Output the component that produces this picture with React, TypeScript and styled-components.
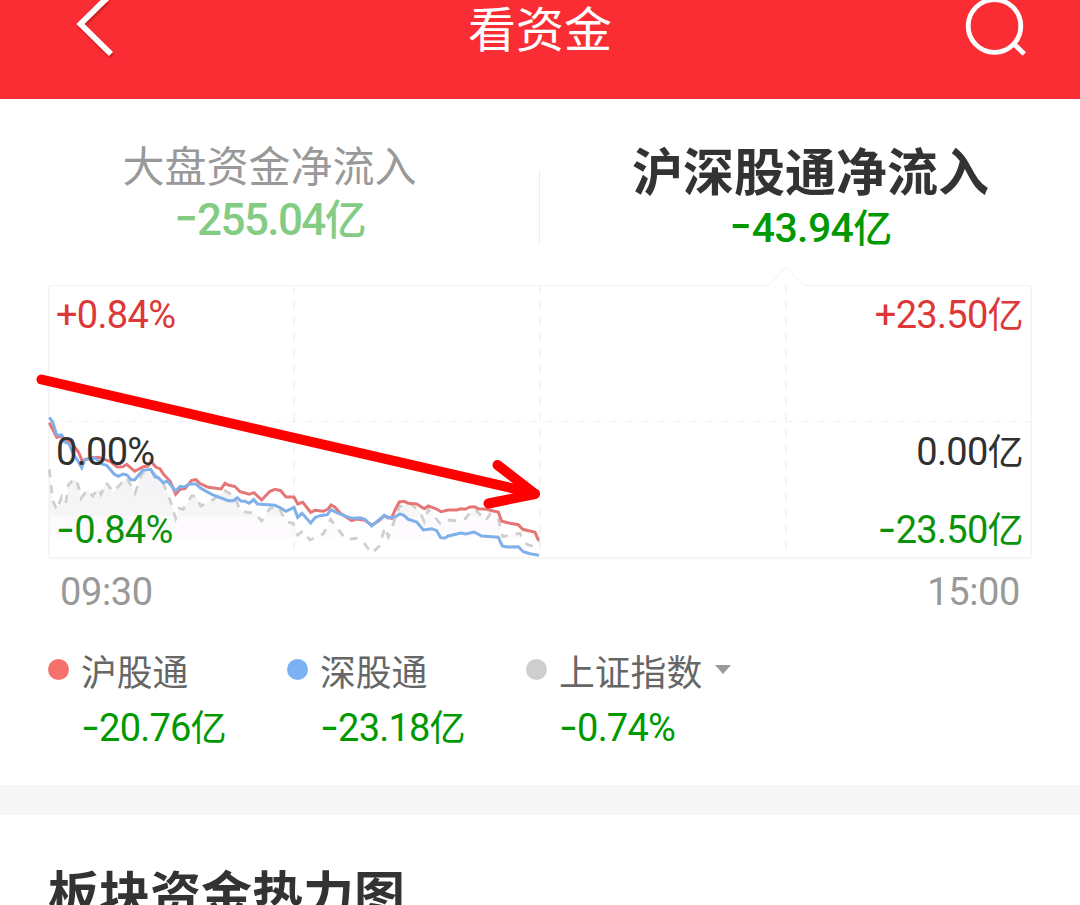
import { Fragment } from "react";
import styled, { createGlobalStyle } from "styled-components";

const GlobalStyle = createGlobalStyle`
  * {
    box-sizing: border-box;
  }

  html,
  body {
    margin: 0;
    background: #fff;
  }

  body {
    font-family: Roboto, "Noto Sans CJK SC", sans-serif;
    color: #333;
  }
`;

const Page = styled.div`
  width: 1080px;
  height: 905px;
  overflow: hidden;
  display: flex;
  flex-direction: column;
  background: #fff;
`;

const Header = styled.header`
  height: 99px;
  flex-shrink: 0;
  display: grid;
  grid-template-columns: 1fr auto 1fr;
  background: #f92d33;
  color: #fff;
`;

const HeaderTitle = styled.h1`
  margin: 0;
  padding-top: 1px;
  font-size: 48px;
  font-weight: 400;
  line-height: 60px;
`;

const BackIcon = styled.svg`
  width: 50px;
  height: 70px;
  margin-left: 70px;
  filter: drop-shadow(1px 2px 1px rgba(120, 0, 0, 0.4));
`;

const SearchIcon = styled.svg`
  width: 70px;
  height: 70px;
  margin-right: 50px;
  justify-self: end;
`;

const FundCard = styled.section`
  height: 686px;
  flex-shrink: 0;
  padding: 0 48px;
`;

const Tabs = styled.div`
  height: 187px;
  margin: 0 -48px;
  display: grid;
  grid-template-columns: 539px 1px 540px;
`;

const TabDivider = styled.div`
  height: 73px;
  margin-top: 72px;
  background: #ececec;
`;

const Tab = styled.div<{ $active?: boolean }>`
  padding-top: ${(p) => (p.$active ? "45px" : "39px")};
  padding-left: ${(p) => (p.$active ? "1px" : "0")};
  display: flex;
  flex-direction: column;
  align-items: center;
`;

const TabName = styled.div<{ $active?: boolean }>`
  font-size: ${(p) => (p.$active ? "51px" : "42px")};
  font-weight: ${(p) => (p.$active ? 700 : 400)};
  line-height: 60px;
  color: ${(p) => (p.$active ? "#333" : "#999")};
`;

const Sign = styled.span`
  font-family: Inter, sans-serif;
  font-size: 1.08em;
  line-height: 0;
`;

const Unit = styled.span`
  font-family: "Noto Sans CJK SC", sans-serif;
  font-size: 0.95em;
  line-height: 0;
`;

const TabValue = styled.div<{ $active?: boolean }>`
  font-size: ${(p) => (p.$active ? "41px" : "44px")};
  font-weight: 500;
  line-height: 52px;
  margin-top: ${(p) => (p.$active ? "-2px" : "-4px")};
  letter-spacing: ${(p) => (p.$active ? "-0.6px" : "-1.6px")};
  color: ${(p) => (p.$active ? "#090" : "#84cc84")};

  ${Sign} {
    font-size: 1.22em;
    font-weight: 400;
  }
`;

const ChartBox = styled.div`
  position: relative;
  height: 272px;
`;

const ChartSvg = styled.svg`
  position: absolute;
  left: -48px;
  top: -26px;
`;

const AxisLabels = styled.div`
  position: relative;
  height: 272px;
  padding: 4px 9px 0 8px;
  display: grid;
  grid-template-columns: auto auto;
  grid-template-rows: 137px 78px 50px;
  justify-content: space-between;
`;

const AxisLabel = styled.div<{ $tone: string; $end?: boolean }>`
  height: 50px;
  font-size: 38px;
  line-height: 50px;
  letter-spacing: -0.7px;
  color: ${(p) => p.$tone};
  text-align: ${(p) => (p.$end ? "right" : "left")};
`;

const TimeRow = styled.div`
  padding: 9px 12px 0;
  display: flex;
  justify-content: space-between;
  font-size: 38px;
  line-height: 50px;
  letter-spacing: -0.4px;
  color: #999;
`;

const Legend = styled.div`
  margin-top: 29px;
  display: grid;
  grid-template-columns: 239px 239px auto;
  justify-content: start;
`;

const LegendItem = styled.div`
  display: grid;
  grid-template-columns: 33px auto;
  grid-template-rows: 53px 57px;
  align-items: center;
`;

const Dot = styled.span<{ $color: string }>`
  width: 21px;
  height: 21px;
  margin-bottom: 6px;
  border-radius: 50%;
  background: ${(p) => p.$color};
`;

const LegendName = styled.div`
  padding-top: 3px;
  display: flex;
  align-items: center;
  font-size: 35.8px;
  line-height: 52px;
  color: #666;
`;

const Caret = styled.span`
  margin-left: 13px;
  margin-bottom: 9px;
  border-left: 8px solid transparent;
  border-right: 8px solid transparent;
  border-top: 9px solid #999;
`;

const LegendValue = styled.div`
  grid-column: 2;
  font-size: 38px;
  line-height: 52px;
  letter-spacing: -0.8px;
  color: #090;
`;

const Gap = styled.div`
  height: 30px;
  flex-shrink: 0;
  background: #f6f6f6;
`;

const SectionTitle = styled.h2`
  margin: 0;
  padding: 52px 48px 0;
  font-size: 51px;
  font-weight: 700;
  line-height: 60px;
  white-space: nowrap;
`;

const RED = "#dd3738";
const GREEN = "#0a930a";
const DARK = "#303030";

const shanghai =
  "49.3,422.7 56.7,437.3 61.7,436 65,440 71.7,443.3 78.3,451.7 82.3,461 90,458 98.3,457.3 110,461.3 117.3,467 122.7,466.7 126.7,464.3 134.7,471.3 143.3,466.7 148.3,466 150.7,461 156,467.3 160,468.7 163.3,474 170,481 175.7,494.3 180,489.3 185,488.7 191.7,480.3 196,479.7 200,483.5 208.3,487.3 221,489 225,483.3 228.3,485 235,486.5 240,491.7 249.3,494.3 254,492.7 261.7,500 270,491.3 275,489.3 280.7,490.7 286,497 294,497 297.7,504 302.7,502.3 310.7,512.3 315,510.3 323.3,511.3 328,509 331,505 335,507.3 340,513 351.7,520.5 356.7,519 365,520.3 371.7,525.3 378.3,521.3 384.3,516 391.7,518.3 395,510 399.3,502 404.3,501.3 408.3,503.3 416.7,504 424.3,508.7 428.3,506 436.7,509 441,511.7 448.3,510 456.7,510 461,508.7 465,509.3 470,507 474.3,506.7 478.3,508.7 486.7,509.3 493.3,511 498.3,512 501.7,521.3 510,523.3 518.3,524.7 522.7,529.3 535,532.3 538.7,540.7";

const shenzhen =
  "49.3,417.3 52.7,422 56.7,435 61.7,435 64.3,441.7 69,444 73.3,454 77.3,460 81.7,467.7 85,459.3 95,458 101.7,464 106.7,465.3 114,474 118.3,476.3 123.3,474 127,475 131,479.7 134.7,479.7 142.7,470.3 150.7,469.3 155,476.7 158.3,477.7 163.3,482.7 167.3,481 175.7,491 180,486.3 184,487 190,484 196,484 200,487.7 211.7,494.3 228.3,500.7 233.3,500.7 237.3,497.7 241,501 245,501.3 249.3,503.3 253.7,499.5 257.3,504 275,505.3 280.7,508 286,511.3 294,507.3 297.7,517.3 302,513.3 310.7,523 315,517.7 320,515.7 327.3,514.7 331,509.7 336.7,512.7 346.7,516.7 351.7,518.3 360,517.7 365,519.3 371.7,526 384.3,515.3 387.7,518 395,517 400,514 404,515.3 408.3,519.3 416.7,522 423.3,530 431.7,528.7 436.7,530.7 440.7,537.7 445,538 448.3,536 461,533 466,534 474,532 481.7,536 498.3,537.3 502.3,546 507,547 518.3,546.7 523.3,551.7 530,553.7 539,555.3";

const composite =
  "49.3,469.3 52.7,500 56.7,510 61.7,496.7 65.7,503.3 68.3,485 75,478.3 78.3,486 81,498.3 87.3,490 92.7,496 98.3,488.3 101,494.3 106,482.7 113.3,491.7 126.7,477.7 135,493.3 141.7,474 150.7,470 163.3,483.3 170,500 175.7,518.3 179,508.3 183.3,509.3 191.7,496 196,496 200.7,506 210,501.7 225,490.7 235,496.7 240,511 247.3,512.3 254.3,512.7 261.7,521 270,508.3 278.3,506.7 286.7,522.3 293,523 297.7,535 302.7,531 310,540 323.3,534 330.7,519.3 346,539.5 356.7,538.3 363.3,542 371.7,553.3 379.3,546 385,527.3 388.3,536.7 391.7,528.3 399.3,506.7 410,503.3 420,511.7 424.3,521.7 428.3,509.3 440,523.3 448.3,520 456.7,521 466,518.3 471.7,510 476,510 485.7,520.7 490,514 498.3,519.3 502.7,536.7 520,533.3 523.3,541.7 528.3,545 535,546.7 539,541.7";

const legend = [
  { name: "沪股通", value: "-20.76亿", color: "#f6716c" },
  { name: "深股通", value: "-23.18亿", color: "#7cb1f5" },
  { name: "上证指数", value: "-0.74%", color: "#cecece", caret: true },
];

const axis = [
  { left: "+0.84%", right: "+23.50亿", tone: RED },
  { left: "0.00%", right: "0.00亿", tone: DARK },
  { left: "-0.84%", right: "-23.50亿", tone: GREEN },
];

// Splits "-43.94亿" so that the sign and the unit get their own fonts
function Amount({ text }: { text: string }) {
  const negative = text.startsWith("-");
  const unit = text.endsWith("亿");
  const digits = text.slice(negative ? 1 : 0, unit ? -1 : undefined);

  return (
    <>
      {negative && <Sign>-</Sign>}
      {digits}
      {unit && <Unit>亿</Unit>}
    </>
  );
}

function FlowChart() {
  return (
    <ChartSvg width="1080" height="310" viewBox="0 260 1080 310" fill="none">
      <defs>
        <linearGradient
          id="area"
          gradientUnits="userSpaceOnUse"
          x1="0"
          y1="460"
          x2="0"
          y2="558"
        >
          <stop offset="0" stopColor="#f4f2f5" />
          <stop offset="0.34" stopColor="#f6f4f7" />
          <stop offset="0.35" stopColor="#f5f5f5" />
          <stop offset="0.57" stopColor="#f6f6f6" />
          <stop offset="0.575" stopColor="#fdfafd" />
          <stop offset="0.79" stopColor="#fefbfe" />
          <stop offset="0.8" stopColor="#fff" />
        </linearGradient>
      </defs>
      <polygon points={`49,558 ${composite} 539,558`} fill="url(#area)" />
      <path
        d="M48.5 285.5H768L786 267L804 285.5H1031"
        stroke="#f1f1f1"
        strokeWidth="1"
      />
      <path d="M49 286V558H1031V286" stroke="#f5f5f5" strokeWidth="2" />
      <path
        d="M294 285V558M540 285V558M786 285V558"
        stroke="#f5f5f5"
        strokeWidth="2"
        strokeDasharray="8 8"
      />
      <path d="M50 421.5H1031" stroke="#eee" strokeDasharray="8 8" />
      <polyline
        points={composite}
        stroke="#cfcfcf"
        strokeWidth="2.8"
        strokeDasharray="8 8"
      />
      <polyline points={shanghai} stroke="#e67676" strokeWidth="3" />
      <polyline points={shenzhen} stroke="#80b0ea" strokeWidth="3" />
      <path
        d="M41.5 379.5L535 493.5M497.5 465L535 494L488.5 503.5"
        stroke="#f00"
        strokeWidth="10"
        strokeLinecap="round"
        strokeLinejoin="round"
      />
    </ChartSvg>
  );
}

export default function App() {
  return (
    <Page>
      <GlobalStyle />
      <Header>
        <BackIcon viewBox="70 0 50 70" fill="none">
          <path d="M112 -7L80.5 24L111 54" stroke="#fff" strokeWidth="5.8" />
        </BackIcon>
        <HeaderTitle>看资金</HeaderTitle>
        <SearchIcon viewBox="960 0 70 70" fill="none">
          <circle cx="994.5" cy="26" r="26.3" stroke="#fff" strokeWidth="4.8" />
          <path d="M1013.5 43.5L1024.3 54" stroke="#fff" strokeWidth="4.8" />
        </SearchIcon>
      </Header>

      <FundCard>
        <Tabs>
          <Tab>
            <TabName>大盘资金净流入</TabName>
            <TabValue>
              <Amount text="-255.04亿" />
            </TabValue>
          </Tab>
          <TabDivider />
          <Tab $active>
            <TabName $active>沪深股通净流入</TabName>
            <TabValue $active>
              <Amount text="-43.94亿" />
            </TabValue>
          </Tab>
        </Tabs>

        <ChartBox>
          <FlowChart />
          <AxisLabels>
            {axis.map((row) => (
              <Fragment key={row.left}>
                <AxisLabel $tone={row.tone}>
                  <Amount text={row.left} />
                </AxisLabel>
                <AxisLabel $tone={row.tone} $end>
                  <Amount text={row.right} />
                </AxisLabel>
              </Fragment>
            ))}
          </AxisLabels>
        </ChartBox>

        <TimeRow>
          <span>09:30</span>
          <span>15:00</span>
        </TimeRow>

        <Legend>
          {legend.map((item) => (
            <LegendItem key={item.name}>
              <Dot $color={item.color} />
              <LegendName>
                {item.name}
                {item.caret && <Caret />}
              </LegendName>
              <LegendValue>
                <Amount text={item.value} />
              </LegendValue>
            </LegendItem>
          ))}
        </Legend>
      </FundCard>

      <Gap />
      <SectionTitle>板块资金热力图</SectionTitle>
    </Page>
  );
}
